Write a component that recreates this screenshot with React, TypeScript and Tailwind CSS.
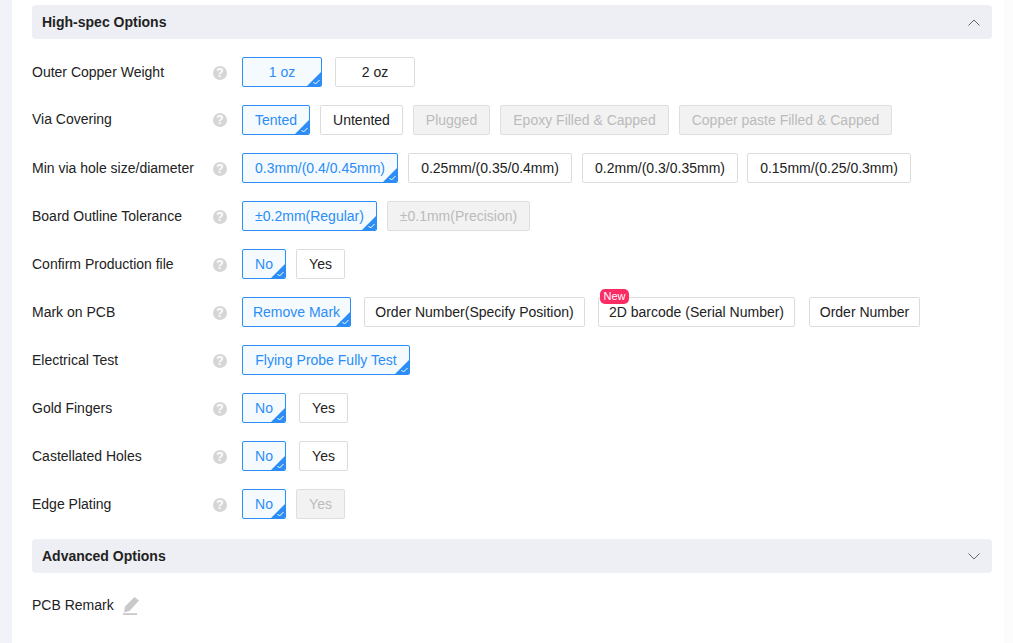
const options = [
  {
    label: "Outer Copper Weight",
    gap: "gap-[13px]",
    items: [
      { text: "1 oz", width: "w-[80px]", state: "on" },
      { text: "2 oz", width: "w-[80px]" },
    ],
  },
  {
    label: "Via Covering",
    labelClass: "-mt-[2px]",
    helpClass: "",
    gap: "gap-[10px]",
    items: [
      { text: "Tented", width: "w-[68px]", state: "on" },
      { text: "Untented", width: "w-[83px]" },
      { text: "Plugged", width: "w-[77px]", state: "off" },
      { text: "Epoxy Filled & Capped", width: "w-[169px]", state: "off" },
      { text: "Copper paste Filled & Capped", width: "w-[213px]", state: "off" },
    ],
  },
  {
    label: "Min via hole size/diameter",
    gap: "gap-[10px]",
    items: [
      { text: "0.3mm/(0.4/0.45mm)", width: "w-[156px]", state: "on" },
      { text: "0.25mm/(0.35/0.4mm)", width: "w-[164px]" },
      { text: "0.2mm/(0.3/0.35mm)", width: "w-[156px]" },
      { text: "0.15mm/(0.25/0.3mm)", width: "w-[164px] -ml-[1px]" },
    ],
  },
  {
    label: "Board Outline Tolerance",
    gap: "gap-[10px]",
    items: [
      { text: "±0.2mm(Regular)", width: "w-[135px]", state: "on" },
      { text: "±0.1mm(Precision)", width: "w-[143px]", state: "off" },
    ],
  },
  {
    label: "Confirm Production file",
    gap: "gap-[10px]",
    items: [
      { text: "No", width: "w-[44px]", state: "on" },
      { text: "Yes", width: "w-[49px]" },
    ],
  },
  {
    label: "Mark on PCB",
    gap: "gap-[13px]",
    items: [
      { text: "Remove Mark", width: "w-[109px]", state: "on" },
      { text: "Order Number(Specify Position)", width: "w-[221px]" },
      { text: "2D barcode (Serial Number)", width: "w-[197px]", badge: true },
      { text: "Order Number", width: "w-[111px] ml-[1px]" },
    ],
  },
  {
    label: "Electrical Test",
    gap: "gap-[10px]",
    items: [{ text: "Flying Probe Fully Test", width: "w-[168px]", state: "on" }],
  },
  {
    label: "Gold Fingers",
    gap: "gap-[13px]",
    items: [
      { text: "No", width: "w-[44px]", state: "on" },
      { text: "Yes", width: "w-[49px]" },
    ],
  },
  {
    label: "Castellated Holes",
    gap: "gap-[13px]",
    items: [
      { text: "No", width: "w-[44px]", state: "on" },
      { text: "Yes", width: "w-[49px]" },
    ],
  },
  {
    label: "Edge Plating",
    gap: "gap-[10px]",
    items: [
      { text: "No", width: "w-[44px]", state: "on" },
      { text: "Yes", width: "w-[49px]", state: "off" },
    ],
  },
];

const HelpIcon = ({ className }: { className?: string }) => (
  <span className={`flex h-[14px] w-[14px] items-center justify-center rounded-full bg-[#d6d6d6] text-[12px] font-bold leading-none text-white ${className ?? "mt-[2px]"}`}>
    ?
  </span>
);

const Chevron = ({ up }: { up?: boolean }) => (
  <svg width="12" height="7" viewBox="0 0 12 7" fill="none" stroke="#666" strokeWidth="1">
    <path d={up ? "M0.5 6.5L6 1L11.5 6.5" : "M0.5 0.5L6 6L11.5 0.5"} />
  </svg>
);

const SectionHeader = ({ title, up }: { title: string; up?: boolean }) => (
  <div className="flex h-[34px] items-center justify-between rounded-[4px] bg-[#eeeff4] pl-[10px] pr-[12px]">
    <h3 className="text-[14px] font-bold text-[#222]">{title}</h3>
    <Chevron up={up} />
  </div>
);

const OptionButton = ({ text, width, state, badge }: { text: string; width: string; state?: string; badge?: boolean }) => {
  if (state === "on") {
    return (
      <button className={`relative h-[30px] overflow-hidden rounded-[2px] border border-[#2b8df5] bg-[#f5faff] text-[14px] text-[#2b8df5] ${width}`}>
        {text}
        <span className="absolute bottom-0 right-0 h-[14px] w-[14px] bg-[#2b8df5] [clip-path:polygon(100%_0,100%_100%,0_100%)]" />
        <svg className="absolute bottom-[1px] right-[1px]" width="7" height="6" viewBox="0 0 7 6" fill="none" stroke="#fff" strokeWidth="1">
          <path d="M0.5 3L2.5 5L6.5 1" />
        </svg>
      </button>
    );
  }
  if (state === "off") {
    return (
      <button className={`h-[30px] rounded-[2px] border border-[#dedede] bg-[#f2f2f2] text-[14px] text-[#bbbbbb] ${width}`}>
        {text}
      </button>
    );
  }
  return (
    <button className={`relative h-[30px] rounded-[2px] border border-[#dcdcdc] bg-white text-[14px] text-[#222] ${width}`}>
      {text}
      {badge && (
        <span className="absolute left-[1px] top-[-9px] rounded-[5px] bg-[#fb2b64] px-[3.5px] text-[11px] font-medium leading-[15px] text-white">
          New
        </span>
      )}
    </button>
  );
};

const App = () => {
  return (
    <div className="flex h-[643px] overflow-hidden bg-[#fcfcfd] font-['Liberation_Sans',Arial,sans-serif]">
      <div className="w-[12px] bg-[#f2f3f8]" />
      <div className="w-[992px] bg-white pl-[20px] pt-[5px]">
        <div className="w-[960px]">
          <SectionHeader title="High-spec Options" up />
          <div className="mt-[18px] flex flex-col gap-[18px]">
            {options.map((row) => (
              <div key={row.label} className="flex h-[30px] items-center">
                <span className={`w-[181px] text-[14px] text-[#222] ${row.labelClass ?? ""}`}>{row.label}</span>
                <HelpIcon className={row.helpClass} />
                <div className={`ml-[15px] flex ${row.gap}`}>
                  {row.items.map((item) => (
                    <OptionButton key={item.text} {...item} />
                  ))}
                </div>
              </div>
            ))}
          </div>
          <div className="mt-[20px]">
            <SectionHeader title="Advanced Options" />
          </div>
          <div className="mt-[22px] flex items-center">
            <span className="text-[14px] text-[#222]">PCB Remark</span>
            <svg className="ml-[9px]" width="17" height="18" viewBox="0 0 17 18" fill="#c9c9c9">
              <path d="M11.5 0L16 3.5L6.5 14L1 15.5L2 9.5Z" />
              <rect x="0" y="16.2" width="14" height="1.8" />
            </svg>
          </div>
        </div>
      </div>
    </div>
  );
};

export default App;
